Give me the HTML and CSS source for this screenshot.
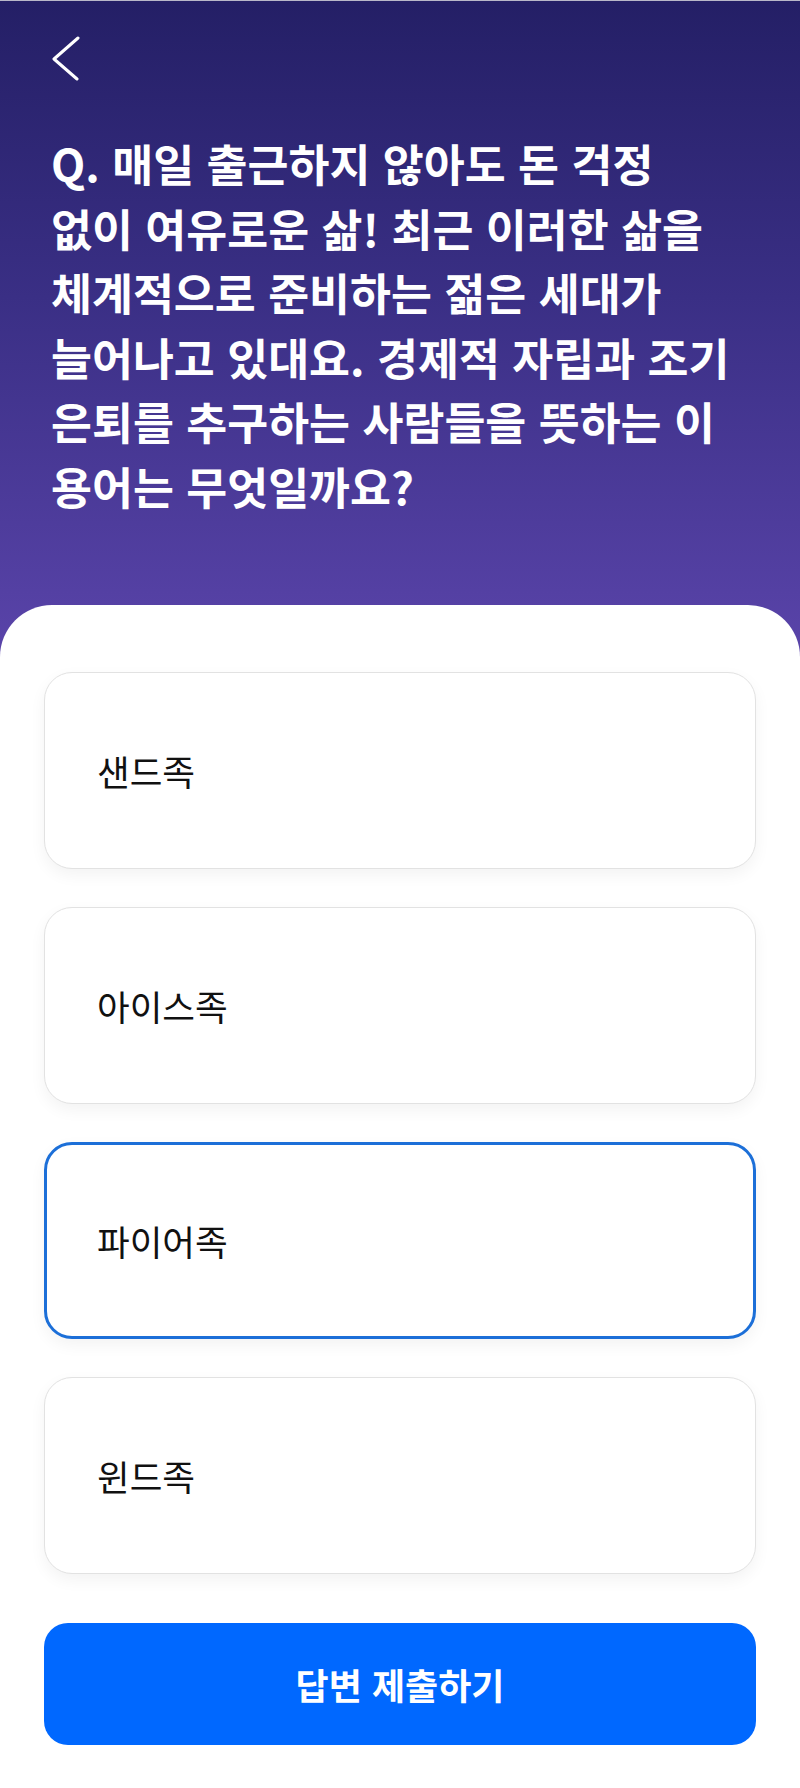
FILE: index.html
```html
<!DOCTYPE html>
<html lang="ko">
<head>
    <meta charset="UTF-8">
    <title>퀴즈</title>
    <link rel="stylesheet" href="styles.css">
</head>
<body>
    <header class="quiz-head">
        <button class="back-btn" type="button" aria-label="뒤로">
            <svg width="30" height="46" viewBox="0 0 30 46">
                <polyline points="27,3 3,24 26,44" fill="none" stroke="#fff" stroke-width="3" stroke-linecap="round" stroke-linejoin="round"/>
            </svg>
        </button>
        <h1 class="question">Q. 매일 출근하지 않아도 돈 걱정<br>없이 여유로운 삶! 최근 이러한 삶을<br>체계적으로 준비하는 젊은 세대가<br>늘어나고 있대요. 경제적 자립과 조기<br>은퇴를 추구하는 사람들을 뜻하는 이<br>용어는 무엇일까요?</h1>
    </header>
    <main class="sheet">
        <div class="options">
            <div class="option">샌드족</div>
            <div class="option">아이스족</div>
            <div class="option selected">파이어족</div>
            <div class="option">윈드족</div>
        </div>
        <button class="submit-btn" type="button">답변 제출하기</button>
    </main>
</body>
</html>
```

FILE: styles.css
```css
body { margin: 0; font-family: "Noto Sans CJK KR", "Noto Sans", sans-serif; background: #fff; }
.quiz-head { height: 660px; box-sizing: border-box; padding: 34px 20px 0 51px; border-top: 1px solid #b9b8c9; background: linear-gradient(180deg, #241f66 0%, #3a2f85 45%, #5a44aa 100%); }
.back-btn { display: block; padding: 0; border: 0; background: none; width: 30px; height: 46px; }
.back-btn svg { display: block; }
.question { margin: 50px 0 0; color: #fff; font-size: 44.5px; font-weight: 700; line-height: 64.5px; white-space: nowrap; }
.sheet { position: relative; margin-top: -55px; padding: 67px 44px 42px; background: #fff; border-radius: 52px 52px 0 0; }
.options { display: flex; flex-direction: column; gap: 38px; }
.option { height: 197px; box-sizing: border-box; display: flex; align-items: center; padding-left: 52px; border: 1px solid #e2e2e2; border-radius: 28px; background: #fff; box-shadow: 0 6px 16px rgba(0, 0, 0, 0.05); color: #111; font-size: 35.5px; }
.option.selected { border: 3px solid #1c6fd8; padding-left: 50px; }
.submit-btn { display: block; width: 100%; height: 122px; margin-top: 49px; border: 0; border-radius: 24px; background: #0068ff; color: #fff; font-family: inherit; font-size: 36px; font-weight: 700; }
```
